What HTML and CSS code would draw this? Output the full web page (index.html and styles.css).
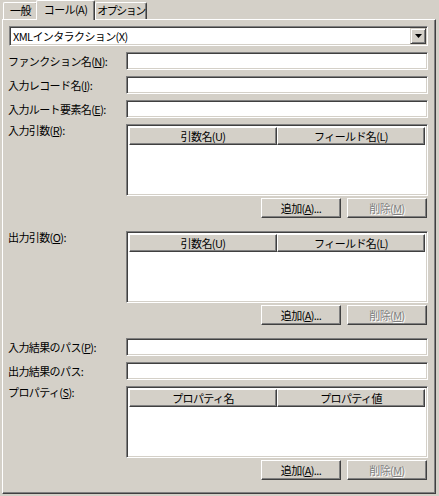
FILE: index.html
```html
<!DOCTYPE html>
<html>
<head>
  <meta charset="UTF-8">
  <link rel="stylesheet" href="styles.css">
</head>
<body>
  <div class="tabs">
    <div class="tab tab-first">一般</div>
    <div class="tab tab-active">コール(A)</div>
    <div class="tab tab-last">オプション</div>
  </div>

  <div class="page">
    <div class="combo">
      <span class="combo-text">XMLインタラクション(X)</span>
      <span class="combo-btn">
        <svg width="7" height="4" viewBox="0 0 7 4"><path d="M0 0h7L3.5 4z" fill="#000"/></svg>
      </span>
    </div>

    <div class="row">
      <span class="label">ファンクション名(<u>N</u>):</span>
      <div class="field"></div>
    </div>
    <div class="row">
      <span class="label">入力レコード名(<u>I</u>):</span>
      <div class="field"></div>
    </div>
    <div class="row">
      <span class="label">入力ルート要素名(<u>E</u>):</span>
      <div class="field"></div>
    </div>

    <div class="row row-list">
      <span class="label">入力引数(<u>R</u>):</span>
      <div class="list-group">
        <div class="list">
          <div class="list-head">
            <div class="head-cell">引数名(U)</div>
            <div class="head-cell">フィールド名(L)</div>
          </div>
        </div>
        <div class="buttons">
          <button class="btn">追加(<u>A</u>)...</button>
          <button class="btn" disabled>削除(<u>M</u>)</button>
        </div>
      </div>
    </div>

    <div class="row row-list">
      <span class="label">出力引数(<u>O</u>):</span>
      <div class="list-group">
        <div class="list">
          <div class="list-head">
            <div class="head-cell">引数名(U)</div>
            <div class="head-cell">フィールド名(L)</div>
          </div>
        </div>
        <div class="buttons">
          <button class="btn">追加(<u>A</u>)...</button>
          <button class="btn" disabled>削除(<u>M</u>)</button>
        </div>
      </div>
    </div>

    <div class="row">
      <span class="label">入力結果のパス(<u>P</u>):</span>
      <div class="field"></div>
    </div>
    <div class="row">
      <span class="label">出力結果のパス:</span>
      <div class="field"></div>
    </div>

    <div class="row row-list">
      <span class="label">プロパティ(<u>S</u>):</span>
      <div class="list-group">
        <div class="list">
          <div class="list-head">
            <div class="head-cell">プロパティ名</div>
            <div class="head-cell">プロパティ値</div>
          </div>
        </div>
        <div class="buttons">
          <button class="btn">追加(<u>A</u>)...</button>
          <button class="btn" disabled>削除(<u>M</u>)</button>
        </div>
      </div>
    </div>
  </div>
</body>
</html>
```

FILE: styles.css
```css
body {
  margin: 0;
  width: 439px;
  height: 496px;
  background: #d4d0c8;
  color: #000;
  font-family: "Noto Sans CJK JP", "Liberation Sans", sans-serif;
  font-size: 11px;
  letter-spacing: -0.6px;
  overflow: hidden;
}

u {
  text-decoration: underline;
  text-underline-offset: 1px;
}

/* tab strip */
.tabs {
  display: flex;
  align-items: flex-end;
  height: 19px;
  padding-left: 3px;
}

.tab {
  box-sizing: border-box;
  height: 17px;
  line-height: 15px;
  text-align: center;
  white-space: nowrap;
  overflow: hidden;
  background: #d4d0c8;
  border-top: 1px solid #fff;
  border-left: 1px solid #fff;
  border-right: 1px solid #404040;
  box-shadow: inset -1px 0 #808080;
  border-radius: 2px 2px 0 0;
}

.tab-first {
  width: 35px;
}

.tab-active {
  position: relative;
  z-index: 1;
  width: 59px;
  height: 20px;
  line-height: 17px;
  margin-left: -2px;
  margin-bottom: -1px;
}

.tab-last {
  width: 52px;
  letter-spacing: -1.5px;
}

/* tab page */
.page {
  box-sizing: border-box;
  width: 434px;
  height: 475px;
  margin-left: 2px;
  padding: 6px 7px 0 5px;
  border: 1px solid;
  border-color: #fff #404040 #404040 #fff;
  box-shadow: inset -1px -1px #808080;
  display: flex;
  flex-direction: column;
  gap: 6px;
}

.combo,
.field,
.list {
  box-sizing: border-box;
  background: #fff;
  border: 1px solid;
  border-color: #808080 #fff #fff #808080;
  box-shadow: inset 1px 1px #404040, inset -1px -1px #d4d0c8;
}

.combo {
  height: 20px;
  margin-left: 1px;
  display: flex;
  align-items: center;
  padding: 1px;
}

.combo-text {
  flex: 1;
  padding-left: 2px;
  line-height: 16px;
  white-space: nowrap;
}

.combo-btn {
  box-sizing: border-box;
  width: 16px;
  height: 16px;
  display: flex;
  align-items: center;
  justify-content: center;
  background: #d4d0c8;
  border: 1px solid;
  border-color: #d4d0c8 #404040 #404040 #d4d0c8;
  box-shadow: inset 1px 1px #fff, inset -1px -1px #808080;
}

.row {
  display: flex;
}

.label {
  width: 118px;
  flex: none;
  line-height: 18px;
  white-space: nowrap;
}

.field {
  flex: 1;
  height: 18px;
}

.row-list {
  margin-bottom: 7px;
}

.row-list .label {
  line-height: 13px;
}

.list-group {
  flex: 1;
  display: flex;
  flex-direction: column;
  gap: 2px;
}

.list {
  height: 72px;
  padding: 2px;
}

.list-head {
  display: flex;
  height: 18px;
}

.head-cell {
  flex: 1;
  box-sizing: border-box;
  text-align: center;
  line-height: 16px;
  white-space: nowrap;
  background: #d4d0c8;
  border: 1px solid;
  border-color: #fff #404040 #404040 #fff;
  box-shadow: inset -1px -1px #808080;
}

.buttons {
  display: flex;
  justify-content: flex-end;
  gap: 6px;
  padding-right: 1px;
}

.btn {
  box-sizing: border-box;
  width: 80px;
  height: 20px;
  padding: 0;
  font: inherit;
  letter-spacing: inherit;
  color: #000;
  background: #d4d0c8;
  border: 1px solid;
  border-color: #fff #404040 #404040 #fff;
  box-shadow: inset -1px -1px #808080;
  border-radius: 0;
}

.btn:disabled {
  color: #808080;
  text-shadow: 1px 1px #fff;
}
```
